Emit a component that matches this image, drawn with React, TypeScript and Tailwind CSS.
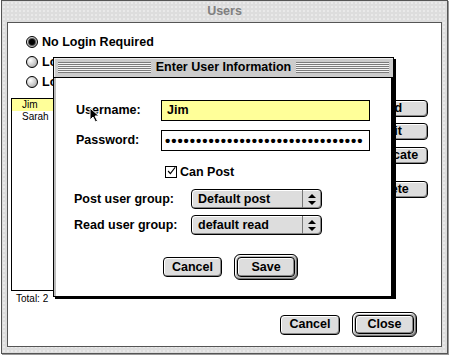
import React from 'react';

const font = "font-['Liberation_Sans',Arial,sans-serif]";

const Radio = ({ checked }: { checked?: boolean }) => (
  <span className="w-[12px] h-[12px] rounded-full border border-black bg-[radial-gradient(circle_at_35%_35%,#ffffff,#c4c4c4_60%,#8a8a8a)] flex items-center justify-center shrink-0">
    {checked && <span className="w-[6px] h-[6px] rounded-full bg-black shadow-[0_0_0_1px_#555]" />}
  </span>
);

const MacButton = ({ label, className = '' }: { label: string; className?: string }) => (
  <div
    className={`rounded-[4px] border border-black bg-[#dddddd] shadow-[inset_1px_1px_0_#ffffff,inset_-1px_-1px_0_#888888] flex items-center justify-center text-[12.5px] font-bold text-black ${className}`}
  >
    {label}
  </div>
);

const DefaultButton = ({ label, className = '' }: { label: string; className?: string }) => (
  <div className={`rounded-[6px] border border-black bg-[#bbbbbb] shadow-[inset_1px_1px_0_#ffffff,inset_-1px_-1px_0_#777777] p-[2px] flex ${className}`}>
    <MacButton label={label} className="flex-1" />
  </div>
);

const Arrows = () => (
  <svg width="8" height="11" viewBox="0 0 8 11">
    <path d="M4 0 L8 4 L0 4 Z" fill="black" />
    <path d="M0 7 L8 7 L4 11 Z" fill="black" />
  </svg>
);

const Popup = ({ value }: { value: string }) => (
  <div className="w-[131px] h-[20px] rounded-[4px] border border-black bg-[#dddddd] shadow-[inset_1px_1px_0_#ffffff,inset_-1px_-1px_0_#888888] flex items-center">
    <span className="flex-1 pl-[6px] text-[12.5px] font-bold leading-none">{value}</span>
    <span className="w-[19px] h-full border-l border-[#777] flex items-center justify-center">
      <Arrows />
    </span>
  </div>
);

const Stripes = () => (
  <div className="flex-1 h-[11px] bg-[repeating-linear-gradient(to_bottom,#7c7c7c_0px,#7c7c7c_1px,#f4f4f4_1px,#f4f4f4_2px)]" />
);

const EnterUserDialog = () => (
  <div className="absolute left-[53px] top-[57px] w-[341px] h-[240px] border border-black bg-white shadow-[2px_2px_0_#000] flex flex-col">
    <div className="h-[20px] bg-[#cccccc] border-b border-black shadow-[inset_1px_1px_0_#eeeeee] flex items-center gap-[5px] px-[4px]">
      <Stripes />
      <span className="text-[12.5px] font-bold leading-none">Enter User Information</span>
      <Stripes />
    </div>
    <div className="flex-1 border-l-2 border-[#bbbbbb] border-r-2 border-r-black flex flex-col">
      <div className="mt-[22px] flex items-center h-[21px] pl-[20px]">
        <span className="w-[85px] text-[12.5px] font-bold">Username:</span>
        <div className="w-[209px] h-[21px] border border-black bg-[#ffff99] flex items-center pl-[5px] text-[12.5px] font-bold">
          Jim
        </div>
      </div>
      <div className="mt-[9px] flex items-center h-[21px] pl-[20px]">
        <span className="w-[85px] text-[12.5px] font-bold">Password:</span>
        <div className="w-[209px] h-[21px] border border-black bg-white flex items-center pl-[3px] text-[15px] font-bold tracking-[0.95px] leading-none overflow-hidden whitespace-nowrap">
          {'•'.repeat(32)}
        </div>
      </div>
      <div className="mt-[14px] flex items-center h-[14px] pl-[109px] gap-[3px]">
        <span className="w-[12px] h-[12px] border border-black bg-white flex items-center justify-center">
          <svg width="12" height="12" viewBox="0 0 12 12" className="-mt-[2px] ml-[1px]">
            <path d="M1.5 6 L4.5 9.5 L11 1" stroke="black" strokeWidth="1.6" fill="none" />
          </svg>
        </span>
        <span className="text-[12.5px] font-bold">Can Post</span>
      </div>
      <div className="mt-[10px] flex items-center h-[20px] pl-[18px]">
        <span className="w-[117px] text-[12.5px] font-bold">Post user group:</span>
        <Popup value="Default post" />
      </div>
      <div className="mt-[6px] flex items-center h-[20px] pl-[18px]">
        <span className="w-[117px] text-[12.5px] font-bold">Read user group:</span>
        <Popup value="default read" />
      </div>
      <div className="mt-[19px] flex items-center h-[26px] pl-[107px] gap-[12px]">
        <MacButton label="Cancel" className="w-[59px] h-[20px]" />
        <DefaultButton label="Save" className="w-[64px] h-[26px]" />
      </div>
    </div>
  </div>
);

const Cursor = () => (
  <svg className="absolute left-[89px] top-[107px]" width="11" height="17" viewBox="0 0 11 17">
    <path d="M1 1 L1 13 L4 10 L6.5 15 L8.5 14 L6 9 L10 9 Z" fill="black" stroke="white" strokeWidth="1" />
  </svg>
);

export default function App() {
  return (
    <div className={`w-[450px] h-[357px] bg-white relative overflow-hidden text-black ${font}`}>
      <div className="ml-[1px] w-[447px] h-[354px] border border-[#555555] bg-[#dddddd] bg-[radial-gradient(circle,#f6f6f6_0.6px,transparent_0.8px)] bg-size-[4px_4px] shadow-[1px_1px_0_#999999] flex flex-col">
        <div className="h-[21px] flex items-center justify-center text-[12.5px] font-bold text-[#808080]">Users</div>
        <div className="mx-[5px] mb-[6px] flex-1 border border-[#555555] bg-white flex flex-col">
          <div className="pt-[9px] pl-[18px] flex flex-col">
            <div className="h-[20px] flex items-center gap-[4px]">
              <Radio checked />
              <span className="text-[12.5px] font-bold">No Login Required</span>
            </div>
            <div className="h-[20px] flex items-center gap-[4px]">
              <Radio />
              <span className="text-[12.5px] font-bold">Login Required</span>
            </div>
            <div className="h-[20px] flex items-center gap-[4px]">
              <Radio />
              <span className="text-[12.5px] font-bold">Login Optional</span>
            </div>
          </div>
          <div className="mt-[6px] flex items-start">
            <div className="ml-[3px] w-[240px] h-[193px] border border-black flex flex-col text-[10px] leading-[12px]">
              <div className="bg-[#ffff99] pl-[10px]">Jim</div>
              <div className="pl-[10px]">Sarah</div>
            </div>
            <div className="ml-auto mr-[13px] mt-[2px] w-[76px] flex flex-col">
              <MacButton label="Add" className="h-[17px]" />
              <MacButton label="Edit" className="h-[17px] mt-[6px]" />
              <MacButton label="Duplicate" className="h-[17px] mt-[7px]" />
              <MacButton label="Delete" className="h-[17px] mt-[17px]" />
            </div>
          </div>
          <div className="mt-[2px] pl-[8px] text-[10px] leading-[12px]">Total: 2</div>
          <div className="mt-[7px] flex items-center justify-end gap-[12px] pr-[24px] h-[25px]">
            <MacButton label="Cancel" className="w-[60px] h-[20px]" />
            <DefaultButton label="Close" className="w-[65px] h-[25px]" />
          </div>
        </div>
      </div>
      <EnterUserDialog />
      <Cursor />
    </div>
  );
}
